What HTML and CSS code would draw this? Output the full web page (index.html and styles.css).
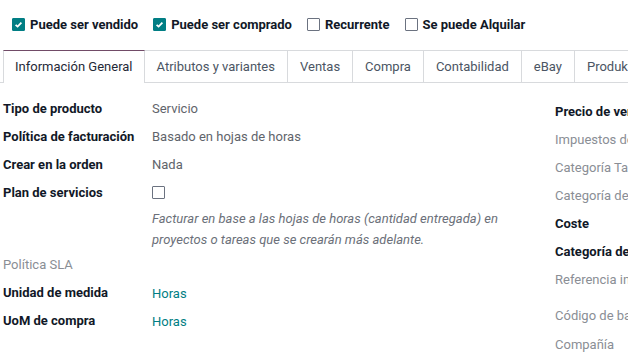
FILE: index.html
```html
<!DOCTYPE html>
<html lang="es">
<head>
<meta charset="utf-8">
<link rel="stylesheet" href="styles.css">
</head>
<body>
<div class="page">
  <div class="checks">
    <label class="chk"><span class="box on"><svg viewBox="0 0 13 13" width="13" height="13"><path d="M3.6 6.8 L5.6 8.6 L9.4 4.6" fill="none" stroke="#fff" stroke-width="1.8"/></svg></span>Puede ser vendido</label>
    <label class="chk"><span class="box on"><svg viewBox="0 0 13 13" width="13" height="13"><path d="M3.6 6.8 L5.6 8.6 L9.4 4.6" fill="none" stroke="#fff" stroke-width="1.8"/></svg></span>Puede ser comprado</label>
    <label class="chk"><span class="box"></span>Recurrente</label>
    <label class="chk"><span class="box"></span>Se puede Alquilar</label>
  </div>
  <div class="tabs">
    <div class="tab active">Información General</div>
    <div class="tab">Atributos y variantes</div>
    <div class="tab">Ventas</div>
    <div class="tab">Compra</div>
    <div class="tab">Contabilidad</div>
    <div class="tab">eBay</div>
    <div class="tab">Produkt Pack</div>
  </div>
  <div class="sheet">
    <div class="group left">
      <div class="row"><div class="lbl">Tipo de producto</div><div class="val">Servicio</div></div>
      <div class="row"><div class="lbl">Política de facturación</div><div class="val">Basado en hojas de horas</div></div>
      <div class="row"><div class="lbl">Crear en la orden</div><div class="val">Nada</div></div>
      <div class="row"><div class="lbl">Plan de servicios</div><div class="val"><span class="box"></span></div></div>
      <div class="desc">Facturar en base a las hojas de horas (cantidad entregada) en proyectos o tareas que se crearán más adelante.</div>
      <div class="row"><div class="lbl muted">Política SLA</div><div class="val"></div></div>
      <div class="row"><div class="lbl">Unidad de medida</div><div class="val link">Horas</div></div>
      <div class="row"><div class="lbl">UoM de compra</div><div class="val link">Horas</div></div>
    </div>
    <div class="group right">
      <div class="row"><div class="lbl">Precio de venta</div></div>
      <div class="row"><div class="lbl muted">Impuestos de cliente</div></div>
      <div class="row"><div class="lbl muted">Categoría Tarifa</div></div>
      <div class="row"><div class="lbl muted">Categoría de producto</div></div>
      <div class="row"><div class="lbl">Coste</div></div>
      <div class="row"><div class="lbl">Categoría de producto</div></div>
      <div class="row"><div class="lbl muted">Referencia interna</div></div>
      <div class="row gap"><div class="lbl muted">Código de barras</div></div>
      <div class="row gap1"><div class="lbl muted">Compañía</div></div>
    </div>
  </div>
</div>
</body>
</html>
```
FILE: styles.css
```css
html, body {
  margin: 0;
  padding: 0;
  background: #fff;
  overflow: hidden;
}
body {
  font-family: Roboto, "Noto Sans", Arial, sans-serif;
  font-size: 13px;
  color: #111827;
}
.page {
  width: 900px;
}
.checks {
  display: flex;
  align-items: center;
  gap: 15px;
  padding: 16px 0 0 12px;
  height: 16px;
}
.chk {
  display: flex;
  align-items: center;
  gap: 5px;
  font-weight: 700;
  font-size: 13px;
  color: #111827;
}
.box {
  display: inline-block;
  width: 11px;
  height: 11px;
  border: 1px solid #6b7280;
  border-radius: 1px;
  background: #fff;
}
.box.on {
  border-color: #017e84;
  background: #017e84;
  position: relative;
}
.box.on svg {
  position: absolute;
  left: -1px;
  top: -1px;
}
.tabs {
  display: flex;
  margin-top: 18px;
  padding-left: 3px;
  border-bottom: 1px solid #d8dadd;
  height: 32px;
}
.tab {
  box-sizing: border-box;
  height: 33px;
  padding: 0 12px;
  line-height: 31px;
  border-top: 1px solid #d8dadd;
  border-right: 1px solid #d8dadd;
  color: #4b5563;
  white-space: nowrap;
  font-size: 13px;
}
.tab.active {
  border-left: 1px solid #d8dadd;
  border-top: 1px solid #714b67;
  background: #fff;
  color: #1f2937;
  padding: 0 11px;
}
.sheet {
  display: flex;
  padding: 11px 0 0 3px;
}
.group.left {
  width: 552px;
}
.group.right {
  padding-top: 3px;
}
.row {
  display: flex;
  align-items: center;
  height: 28px;
}
.lbl {
  width: 149px;
  font-weight: 700;
  color: #111827;
  white-space: nowrap;
}
.lbl.muted {
  font-weight: 400;
  color: #8a8e95;
}
.val {
  color: #5f646b;
}
.val .box {
  display: block;
  border-color: #6b7280;
}
.val.link {
  color: #017e84;
  margin-top: 2px;
}
.desc {
  margin-left: 149px;
  width: 355px;
  font-style: italic;
  color: #6b7079;
  line-height: 21px;
  margin-top: 2px;
}
.right .row .lbl {
  width: auto;
}
.row.gap {
  margin-top: 8px;
}
.row.gap1 {
  margin-top: 1px;
}
```
